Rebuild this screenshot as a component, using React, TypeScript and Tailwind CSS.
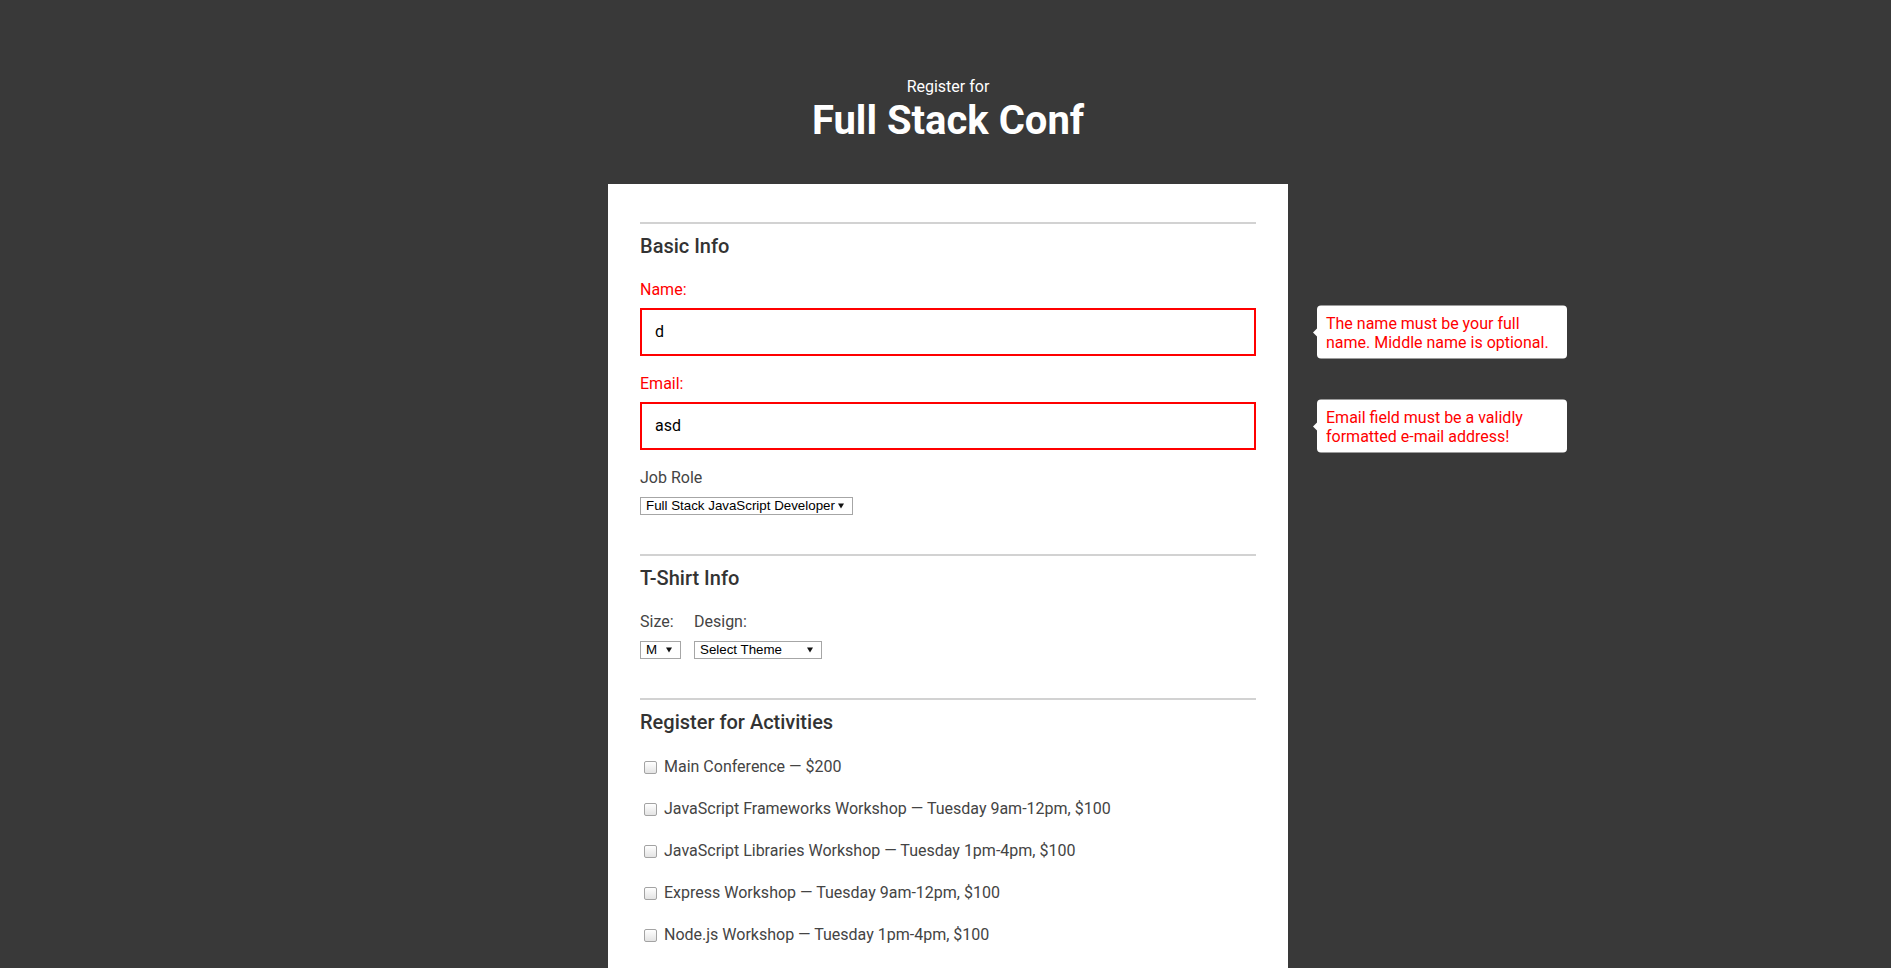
import type { ReactNode } from "react";

const activities = [
  "Main Conference — $200",
  "JavaScript Frameworks Workshop — Tuesday 9am-12pm, $100",
  "JavaScript Libraries Workshop — Tuesday 1pm-4pm, $100",
  "Express Workshop — Tuesday 9am-12pm, $100",
  "Node.js Workshop — Tuesday 1pm-4pm, $100",
];

function Tip({ children }: { children: ReactNode }) {
  return (
    <div className="absolute left-[calc(100%+61px)] top-1/2 w-[250px] -translate-y-1/2 rounded-[4px] bg-white pb-[7px] pl-[9px] pr-2 pt-2 text-[16px] leading-[19px] text-[#ff0000]">
      <span className="absolute -left-[4px] top-1/2 h-0 w-0 -translate-y-1/2 border-y-[4px] border-r-[4px] border-y-transparent border-r-white" />
      {children}
    </div>
  );
}

function FakeSelect({ value, width }: { value: string; width: string }) {
  return (
    <div
      className={`flex h-[18px] items-center border border-[#a6a6a6] bg-white pl-[5px] pr-[8px] font-['Liberation_Sans',Arial,sans-serif] text-[13.33px] leading-none text-black ${width}`}
    >
      <span className="whitespace-nowrap">{value}</span>
      <svg className="ml-auto shrink-0" width="6" height="6" viewBox="0 0 6 6">
        <polygon points="0,0.5 6,0.5 3,5.5" fill="#111" />
      </svg>
    </div>
  );
}

function Section({ title, children }: { title: string; children: ReactNode }) {
  return (
    <section>
      <div className="border-t-2 border-[#d2d2d2]" />
      <h2 className="mt-[10px] text-[20px] font-medium leading-6 text-[#333]">{title}</h2>
      {children}
    </section>
  );
}

export default function App() {
  return (
    <div className="min-h-screen bg-[#393939] pl-[5px] pt-[77px] font-['Roboto',sans-serif]">
      <header className="text-center text-white">
        <p className="text-[16px] leading-5">Register for</p>
        <h1 className="text-[40px] font-bold leading-[48px]">Full Stack Conf</h1>
      </header>

      <form className="mx-auto mt-[39px] w-[680px] bg-white px-8 pb-16 pt-[38px]">
        <Section title="Basic Info">
          <label className="mt-[22px] block text-[16px] leading-5 text-[#ff0000]">Name:</label>
          <div className="relative mt-2">
            <div className="flex h-12 items-center border-2 border-[#ff0000] pl-[13px] text-[16px] text-black">d</div>
            <Tip>The name must be your full name. Middle name is optional.</Tip>
          </div>

          <label className="mt-[18px] block text-[16px] leading-5 text-[#ff0000]">Email:</label>
          <div className="relative mt-2">
            <div className="flex h-12 items-center border-2 border-[#ff0000] pl-[13px] text-[16px] text-black">asd</div>
            <Tip>Email field must be a validly formatted e-mail address!</Tip>
          </div>

          <label className="mt-[18px] block text-[16px] leading-5 text-[#444]">Job Role</label>
          <div className="mt-[9px]">
            <FakeSelect value="Full Stack JavaScript Developer" width="w-[213px]" />
          </div>
        </Section>

        <div className="mt-[39px]">
          <Section title="T-Shirt Info">
            <div className="mt-[22px] flex gap-[13px]">
              <div className="flex flex-col">
                <span className="text-[16px] leading-5 text-[#444]">Size:</span>
                <div className="mt-[9px]">
                  <FakeSelect value="M" width="w-[41px]" />
                </div>
              </div>
              <div className="flex flex-col">
                <span className="text-[16px] leading-5 text-[#444]">Design:</span>
                <div className="mt-[9px]">
                  <FakeSelect value="Select Theme" width="w-[128px]" />
                </div>
              </div>
            </div>
          </Section>
        </div>

        <div className="mt-[39px]">
          <Section title="Register for Activities">
            <div className="mt-[23px] flex flex-col gap-[22px]">
              {activities.map((a) => (
                <label key={a} className="flex items-center text-[16px] leading-5 text-[#444]">
                  <span className="ml-1 mr-[7px] h-[13px] w-[13px] shrink-0 rounded-[2px] border border-[#a3a3a3] bg-gradient-to-b from-white to-[#e3e3e3]" />
                  {a}
                </label>
              ))}
            </div>
          </Section>
        </div>
      </form>
    </div>
  );
}
